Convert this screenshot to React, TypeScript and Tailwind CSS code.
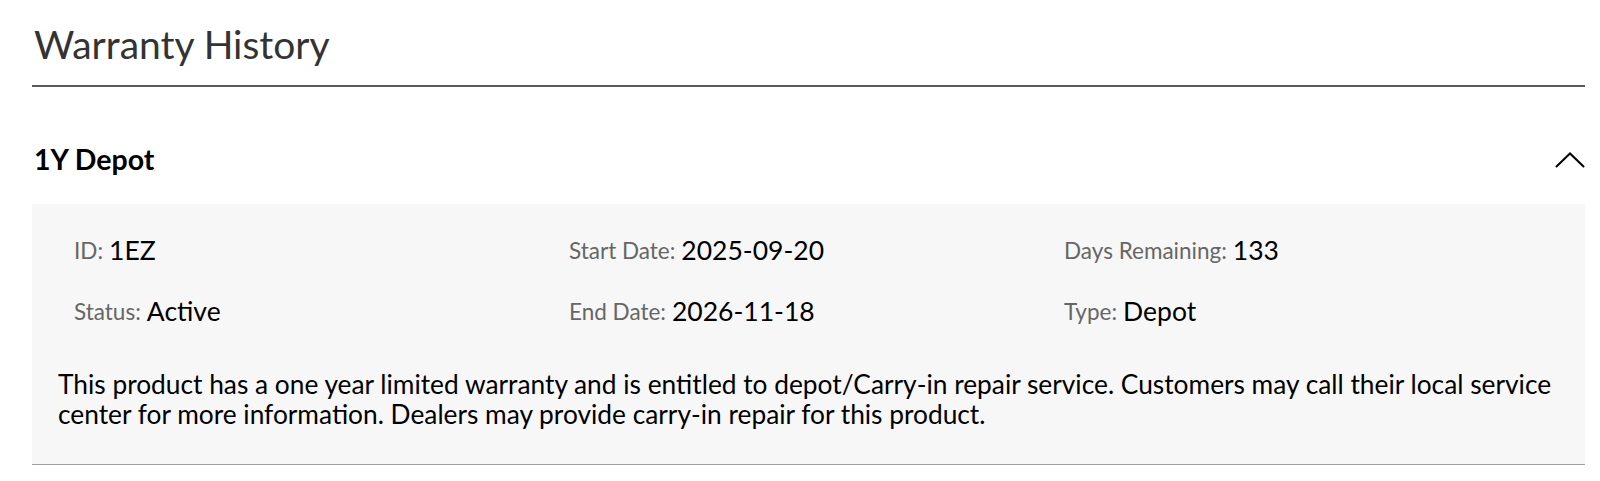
import React from "react";

type Field = { label: string; value: string };

const fields: Field[] = [
  { label: "ID", value: "1EZ" },
  { label: "Start Date", value: "2025-09-20" },
  { label: "Days Remaining", value: "133" },
  { label: "Status", value: "Active" },
  { label: "End Date", value: "2026-11-18" },
  { label: "Type", value: "Depot" },
];

function ChevronUp() {
  return (
    <svg width="30" height="17" viewBox="0 0 30 17" fill="none" aria-hidden="true">
      <path d="M1.5 15.5 L15 2.5 L28.5 15.5" stroke="#000" strokeWidth="2" strokeLinecap="round" strokeLinejoin="miter" />
    </svg>
  );
}

export default function App() {
  return (
    <div className="min-h-[481px] bg-white px-[32px] pt-[23px] font-['Lato','Liberation_Sans',sans-serif] text-black" style={{ width: 1600 }}>
      <h1 className="text-[39px] leading-[43px] font-normal text-[#333] pl-[2px]">Warranty History</h1>
      <div className="mt-[19px] h-[2px] w-[1553px] bg-[#5a5a5a]" />

      <section className="w-[1553px]">
        <button type="button" className="flex w-full items-center justify-between pt-[59px] pb-[31px] pl-[2px]">
          <span className="text-[28.5px] leading-[27px] font-bold">1Y Depot</span>
          <ChevronUp />
        </button>

        <div className="bg-[#f7f7f7] border-b border-[#a0a0a0] px-[26px] pt-[32px] pb-[35px]">
          <div className="grid grid-cols-3 gap-y-[31px] pl-[16px]">
            {fields.map((f) => (
              <div key={f.label} className="h-[30px] flex items-center whitespace-nowrap">
                <span className="text-[22.5px] text-[#666]">{f.label}:</span>
                <span className="ml-[6px] text-[26.5px] text-black">{f.value}</span>
              </div>
            ))}
          </div>
          <p className="mt-[42px] text-[26.3px] leading-[30px] text-black">
            This product has a one year limited warranty and is entitled to depot/Carry-in repair service. Customers may call their local service center for more information. Dealers may provide carry-in repair for this product.
          </p>
        </div>
      </section>
    </div>
  );
}
